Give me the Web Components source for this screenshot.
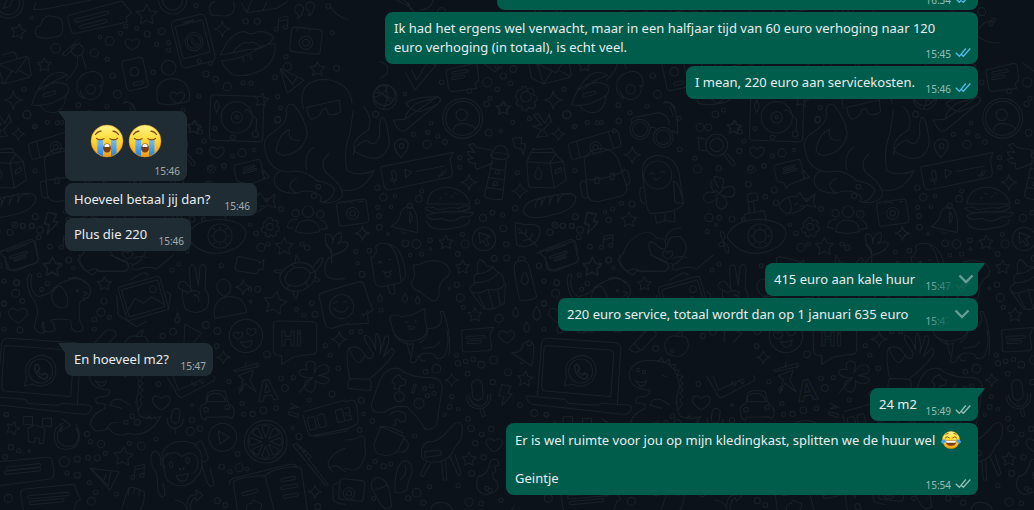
<!DOCTYPE html>
<html lang="nl">
<head>
<meta charset="utf-8">
<title>Chat</title>
<style>
html,body{margin:0;background:#0b1219}
body{font-family:"Noto Sans","Segoe UI",sans-serif;font-size:13px;line-height:19px;color:#e9edef}
</style>
</head>
<body>
<chat-view>
  <chat-message side="out" read time="16:34" style="--min:481px">&nbsp;</chat-message>
  <chat-message side="out" read time="15:45" style="--min:593px">Ik had het ergens wel verwacht, maar in een halfjaar tijd van 60 euro verhoging naar 120<br>euro verhoging (in totaal), is echt veel.</chat-message>
  <chat-message side="out" read time="15:46" style="--min:292px">I mean, 220 euro aan servicekosten.</chat-message>
  <chat-message side="in" first large time="15:46" style="--min:122px"><chat-emoji kind="cry"></chat-emoji><chat-emoji kind="cry"></chat-emoji></chat-message>
  <chat-message side="in" time="15:46" style="--min:192px">Hoeveel betaal jij dan?</chat-message>
  <chat-message side="in" time="15:46" style="--min:126px">Plus die 220</chat-message>
  <chat-message side="out" first menu="soft" time="15:47" style="--min:213px">415 euro aan kale huur</chat-message>
  <chat-message side="out" menu="full" time="15:47" style="--min:420px">220 euro service, totaal wordt dan op 1 januari 635 euro</chat-message>
  <chat-message side="in" first time="15:47" style="--min:148px">En hoeveel m2?</chat-message>
  <chat-message side="out" first time="15:49" style="--min:108px">24 m2</chat-message>
  <chat-message side="out" time="15:54" style="--min:472px">Er is wel ruimte voor jou op mijn kledingkast, splitten we de huur wel <chat-emoji kind="joy"></chat-emoji><br><br>Geintje</chat-message>
</chat-view>

<template id="view-t">
<style>
:host{display:grid;height:100vh;overflow:hidden}
chat-doodles,.list{grid-area:1/1;min-height:0;min-width:0}
.list{display:flex;flex-direction:column;justify-content:flex-end;gap:2px;padding:0 56px 15px 65px;box-sizing:border-box}
::slotted([first]){margin-top:10px}
</style>
<chat-doodles></chat-doodles>
<main class="list"><slot></slot></main>
</template>

<template id="message-t">
<style>
:host{display:flex;flex:none}
:host([side=out]){justify-content:flex-end;--fill:#005c4b}
:host([side=in]){--fill:#202c33}
.bubble{position:relative;display:grid;box-sizing:border-box;max-width:65%;min-width:var(--min,0);background:var(--fill);border-radius:8px}
.text{grid-area:1/1;padding:7px 9px}
.text::after{content:"";display:inline-block;width:34px}
:host([side=out]) .text::after{width:50px}
:host([large]) .text{display:flex;justify-content:center;height:38px;padding:11px 23px 21px}
:host([large]) .text::after{display:none}
.meta{grid-area:1/1;place-self:end;display:flex;gap:4px;padding:0 7px 4px 0;font-size:10px;line-height:12px;color:rgba(255,255,255,.6)}
.meta svg{width:16px;height:12px;fill:none;stroke:currentColor;stroke-width:1.3}
:host([read]) .meta svg{color:#53bdeb}
.tail{position:absolute;top:0;width:8px;height:12px;fill:var(--fill)}
:host([side=in]) .tail{left:-7px}
:host([side=out]) .tail{right:-7px;transform:scaleX(-1)}
:host([side=in][first]) .bubble{border-top-left-radius:0}
:host([side=out][first]) .bubble{border-top-right-radius:0}
button{position:absolute;inset:4px 2px 2px auto;width:52px;border:0;border-radius:8px;display:flex;align-items:flex-start;justify-content:flex-end;color:rgba(255,255,255,.4);background:linear-gradient(90deg,rgba(0,92,75,0),rgba(0,92,75,.9) 60%);padding:6px 2px}
:host([menu=full]) button{padding-right:6px;background:linear-gradient(90deg,rgba(0,92,75,0),#005c4b 50%)}
button svg{width:16px;height:12px;fill:none;stroke:currentColor;stroke-width:2.4}
</style>
<div class="bubble">
<div class="text"><slot></slot></div>
<div class="meta"><time></time></div>
</div>
</template>

<script>
const tpl=id=>document.getElementById(id).content.cloneNode(true);

/* Faces: crying and laughing */
class ChatEmoji extends HTMLElement{
  connectedCallback(){
    if(this.shadowRoot)return;
    const cry=this.getAttribute('kind')==='cry';
    const r=this.attachShadow({mode:'open'});
    const base=`<defs><linearGradient id="y" x1="0" y1="0" x2="0" y2="1"><stop offset="0" stop-color="#fff58a"/><stop offset=".45" stop-color="#ffdb38"/><stop offset="1" stop-color="#f59a16"/></linearGradient><linearGradient id="b" x1="0" y1="0" x2="0" y2="1"><stop offset="0" stop-color="#7cc3f5"/><stop offset="1" stop-color="#2583e0"/></linearGradient></defs>`;
    const face=cry?`<circle cx="19" cy="19" r="16" fill="url(#y)" stroke="#e98b18" stroke-width=".5"/>
<path d="M9.500 17h5.500v17q-3-.6-5.500-3zM23 17h5.500v14q-2.500 2.400-5.500 3z" fill="url(#b)"/>
<path d="M8.500 16.500q3.500 2.500 7.500.3M22 16.800q4 2.200 7.500-.3M7.500 12.500q2-3 5.500-3.300M30.500 12.500q-2-3-5.500-3.300" fill="none" stroke="#8a4a0a" stroke-width="1.300" stroke-linecap="round"/>
<path d="M19 21.500c2.500 0 3.900 2 3.900 4.500s-1.500 4.500-3.900 4.500-3.900-2-3.900-4.500 1.400-4.500 3.900-4.500z" fill="#7b3b10"/><path d="M16.300 23.300q2.700-2.400 5.400 0l-.4 1.800h-4.600z" fill="#fff"/>`
    :`<circle cx="19" cy="19" r="16.500" fill="url(#y)" stroke="#e98b18" stroke-width=".5"/>
<path d="M8.500 20h21q-.5 10-10.500 10T8.500 20z" fill="#7b3b10"/><path d="M9.500 20.500h19l-.8 3.500H10.300z" fill="#fff"/>
<path d="M8 15q3.500-5 8 0M22 15q4.500-5 8 0M9 8.500q2-2 4.500-2M29 8.500q-2-2-4.500-2" fill="none" stroke="#8a4a0a" stroke-width="1.700" stroke-linecap="round"/>
<path d="M9 17.500q-1 8-5.500 8T.5 21Q3 18 9 17.500zM29 17.500q1 8 5.500 8t3-4.500Q35 18 29 17.500z" fill="#3fa4f0"/>`;
    r.innerHTML=`<style>:host{display:inline-block;${cry?'width:38px;height:38px':'width:20px;height:20px;margin-left:2px;vertical-align:-5px'}}svg{display:block;width:100%;height:100%}</style><svg viewBox="0 0 38 38" role="img" aria-label="${cry?'😭':'😂'}">${base}${face}</svg>`;
  }
}

class ChatMessage extends HTMLElement{
  connectedCallback(){
    if(this.shadowRoot)return;
    const r=this.attachShadow({mode:'open'});
    r.append(tpl('message-t'));
    r.querySelector('time').textContent=this.getAttribute('time');
    const bubble=r.querySelector('.bubble');
    if(this.getAttribute('side')==='out')
      r.querySelector('.meta').insertAdjacentHTML('beforeend','<svg viewBox="0 0 16 12" aria-hidden="true"><path d="M.8 4.800 4.300 8.300 10.800.5M6.500 6.500l1.800 1.800L15.300.5"/></svg>');
    if(this.hasAttribute('first'))
      bubble.insertAdjacentHTML('beforeend','<svg class="tail" viewBox="0 0 8 12" aria-hidden="true"><path d="M8 0H1Q0 0 .5 1L7 9.500 8 12z"/></svg>');
    if(this.hasAttribute('menu'))
      bubble.insertAdjacentHTML('beforeend','<button type="button" aria-label="Berichtmenu"><svg viewBox="0 0 16 12"><path d="M1.500 2.500 8 9l6.500-6.500"/></svg></button>');
  }
}

/* Wallpaper: a doodle tile, 540px wide, repeated across the window */
const star=(x,y,r=22,a=0)=>{let p='';for(let i=0;i<10;i++){const q=i%2?r*.5:r,t=(a-90+i*36)*Math.PI/180;p+=(i?'L':'M')+(x+q*Math.cos(t)).toFixed(1)+' '+(y+q*Math.sin(t)).toFixed(1)}return p+'Z'};
const spark=(x,y,r=24)=>`M${x} ${y-r}Q${x+3} ${y-3} ${x+r} ${y}Q${x+3} ${y+3} ${x} ${y+r}Q${x-3} ${y+3} ${x-r} ${y}Q${x-3} ${y-3} ${x} ${y-r}Z`;
const heart=(x,y,r=20)=>`M${x} ${y+r}C${x-r*1.8} ${y+r*.1} ${x-r} ${y-r*1.3} ${x} ${y-r*.4}C${x+r} ${y-r*1.3} ${x+r*1.8} ${y+r*.1} ${x} ${y+r}Z`;
const ring=(x,y,r)=>`M${x-r} ${y}a${r} ${r} 0 1 0 ${2*r} 0a${r} ${r} 0 1 0 ${-2*r} 0Z`;
const bolt=(x,y,s=1)=>`M${x-12*s} ${y-32*s}L${x+16*s} ${y-26*s}L${x+6*s} ${y-6*s}L${x+20*s} ${y-2*s}L${x-12*s} ${y+32*s}L${x-6*s} ${y+6*s}L${x-20*s} ${y+2*s}Z`;
const drop=(x,y,r=12)=>`M${x} ${y-r*1.6}Q${x+r*1.4} ${y+r*.3} ${x} ${y+r}Q${x-r*1.4} ${y+r*.3} ${x} ${y-r*1.6}Z`;
const note=(x,y)=>`M${x-14} ${y+16}L${x-12} ${y-16}L${x+16} ${y-22}L${x+15} ${y+10}M${x-12} ${y-6}L${x+15} ${y-12}`+ring(x-19,y+17,6)+ring(x+9,y+11,6);
const box=(x,y,w,h,a,rx=10)=>`<rect x="${x-w/2}" y="${y-h/2}" width="${w}" height="${h}" rx="${rx}" transform="rotate(${a} ${x} ${y})"/>`;
const pill=(x,y,w,a,h=10)=>box(x,y,w,h,a,h/2);
const P=d=>`<path d="${d}"/>`;
const dots=(s)=>P(s.trim().split(/\s+/).map(t=>{const[a,b,c]=t.split(',').map(Number);return ring(a,b,c||7)}).join(''));
const call='M-12 -10Q-8 -16 -4 -10L-2 -4L-6 0Q-2 6 4 8L8 4L14 8Q14 16 6 16Q-12 10 -12 -10Z';
const at=(x,y,d,s=1)=>`<g transform="translate(${x} ${y}) scale(${s})"><path d="${d}"/></g>`;

const areaA=P(ring(25,10,45)+ring(25,10,34)+'M10 25L20 0L40-8L30 18Z'
 +'M108 8L100 28L130 28L275 0M210 45L360 4Q368 2 372 10L395 38L378 52L382 66L225 100Q216 102 213 92L203 55Q202 47 210 45Z'
 +'M110 110Q98 82 122 76Q130 40 160 50Q192 52 188 80Q192 112 160 112Q130 118 110 110Z'
 +star(55,95,24,10)+star(440,45,32)+ring(518,0,42)+ring(518,0,30)+'M630 35Q622 12 645 5M700 5Q712 45 675 48L645 46Q630 46 630 35'
 +heart(397,130)+spark(667,87)
 +'M662 165Q690 95 735 95Q755 108 770 96Q800 90 822 112Q800 150 745 148Q700 160 662 165ZM665 182Q720 180 765 152Q800 128 825 132Q830 170 800 200Q750 235 700 225Q670 205 665 182ZM700 155Q730 120 745 130Q765 120 780 140M728 170L732 185M750 165L756 180'
 +note(848,70)+'M885 30a13 13 0 1 1 22 6Q905 52 892 55Q898 46 892 40Q885 38 885 30ZM918 22a13 13 0 1 1 22 6Q938 44 925 47Q931 38 925 32Q918 30 918 22ZM725 10L740 38L830 25L862 5M740 38L755 0M790 30L800 5'
 +'M990 20Q1010 50 1045 60'
 +star(952,208,23)+'M840 205L912 240L862 280ZM843 210L878 252L892 230'
 +'M-10 195L75 170Q83 168 85 175L93 220Q94 230 86 233L10 252L-8 190M-5 192L48 218L80 174M12 250L35 214M88 228L58 212M5 165L40 155Q48 155 50 176M-35 185L-25 235L10 252'
 +star(133,195,22)+'M190 160L235 118M186 160Q192 170 200 165L240 125'+ring(232,150,18)
 +'M232 168Q240 205 200 240M246 165L258 205M230 250Q240 215 285 214Q315 225 308 258L298 258M95 315Q110 260 150 225Q180 208 202 226Q160 240 130 268M95 315Q140 320 175 300Q220 280 200 255Q160 235 115 270M120 318Q135 340 165 338Q195 330 198 285M232 255Q225 280 250 295'
 +ring(272,268,14)+'M240 270a32 32 0 1 0 62-14'+ring(506,203,22)+'M475 310Q460 260 490 242Q520 228 550 245Q575 270 567 302Q520 320 475 310'+heart(532,290,20)
 +spark(40,300,28)+ring(710,352,47)+ring(710,352,17)+ring(710,352,5)+'M735 333Q740 326 748 334L770 358L768 392M650 300L658 318L650 338L643 318Z'+ring(766,402,9)
 +star(785,300,22,8)+star(583,383,22,10)+'M370 310Q395 300 405 325'
 +'M910 325Q890 240 975 238Q1050 245 1056 310M920 322L1018 300L1022 335Q1005 348 985 342L978 325L965 330Q962 352 935 358L925 345Z'
 +heart(651,455)+bolt(155,668)
 +'M-10 760L105 722Q115 760 110 765M20 755L80 735')
 +pill(275,50,104,-14)+pill(280,72,84,-14)+box(580,123,105,145,-14,14)+box(578,118,84,100,-14,4)+P(ring(582,125,27)+ring(582,125,20))+at(582,125,call,.8)+P(ring(598,184,6))+pill(566,65,30,-14,4)
 +box(918,122,92,74,6)+P(ring(918,128,20)+ring(918,128,10)+'M890 92L895 82L925 84L930 92')+box(405,222,65,92,-12)+P(ring(403,215,13))+pill(415,250,30,-12)+pill(148,282,40,-16)
 +box(710,355,160,136,2)
 +dots('167,145,14 95,53,5 283,159,12 300,112,5 329,123,13 362,100,6 378,78,6 410,85,6 442,102,9 485,94,10 470,133,6 505,128,6 505,150,6 588,17,6 737,64,8 772,64,9 985,18,7 997,98,6 1010,205,9 862,200,12 858,170,6 825,232,7 618,222,9 647,237,8 682,260,12 729,248,6 753,250,6 597,288,6 632,190,6 322,178,6 338,227,8 352,283,12 460,217,7 270,338,6 235,315,7 172,368,6 80,345,12 103,380,6 72,268,6 833,358,9 833,290,6 645,385,6 672,497,7 632,505,6 698,412,7 955,560,7 800,600,5 120,690,10 95,678,7 68,678,8 45,675,9 105,512,6 600,395,7');

const areaE=P(star(132,112,22)+ring(80,165,33)+ring(80,165,20)+'M102 195L128 228Q138 228 134 216L110 190M45 148L25 142L28 180L48 182'+ring(30,112,12)+ring(55,112,10)
 +'M85 292Q60 250 85 262Q110 262 96 296Q130 280 134 300Q138 330 98 316Q125 345 95 358Q70 350 84 322Q55 350 42 330Q35 300 76 308Q55 290 66 270M76 300L98 320M98 300L76 320'
 +'M110 440Q130 390 205 388Q280 392 288 425Q288 470 220 488Q150 500 110 440ZM158 388L165 372L222 362L228 388M178 368L172 318Q175 306 200 310L204 330L190 332L194 364M176 335L190 335M100 455Q85 425 95 425Q110 430 100 455Q80 460 90 470Q110 470 100 455Q105 490 115 490Q122 470 100 455'
 +ring(210,438,36)+ring(210,438,19)+'M190 415l3 4M230 415l-3 4M190 462l3-4M230 462l-3-4M182 438h6M234 438h6M210 410v5M210 462v5'
 +'M268 345Q285 315 320 320L330 308L340 325L350 332L375 312L370 335L378 352L350 345Q325 372 290 370Q270 362 268 345ZM295 325Q310 345 300 368M315 345l8-6M330 350l10-4'
 +'M350 390l5-8l10 2l3 9l9-3l7 8l-4 9l8 5l-1 10l-9 3l1 10l-9 5l-7-6l-7 7l-9-4v-10l-10-1l-3-10l8-6l-3-9l6-7z'+ring(360,410,10)
 +star(403,470,28)+ring(474,365,17)+'M437 425Q440 390 475 390Q510 395 508 425Q470 435 437 425Z'+ring(437,370,11)+ring(511,373,11)+'M412 412Q415 385 440 388M430 415L412 412M512 390Q530 395 532 415L512 418'
 +'M545 520L545 480Q520 460 528 432Q550 430 548 460Q550 430 572 428Q580 450 562 460Q590 450 595 462Q590 485 548 495M528 465Q540 475 545 495'
 +'M255 225L325 208Q330 208 332 215L342 262Q340 270 330 272L295 285L290 295L280 278L268 276Q262 275 260 268L252 235Q252 226 255 225Z'
 +'M345 178Q335 150 365 130Q420 95 408 60Q415 35 432 45Q465 85 472 130Q460 190 400 196Q370 190 382 165Q390 130 418 118Q412 158 452 150M345 178Q355 245 420 246Q460 235 500 272Q545 280 555 300Q540 340 510 335Q520 320 500 310Q470 295 440 310Q400 285 440 265M372 270Q375 310 440 310M372 270Q375 250 390 245M470 240Q460 190 492 172M536 192Q505 220 530 250Q585 290 575 322Q550 345 510 335M575 300Q640 310 672 242Q620 262 590 240Q580 180 600 130L610 60M640 50Q670 80 655 120Q600 150 615 185Q700 235 718 160Q710 80 695 82Q685 100 690 130Q680 180 650 150Q610 165 610 195'
 +ring(703,15,32)+'M680 -5L725 38M672 22Q705 15 715 -15'
 +spark(637,430,22)
 +'M730 90L765 88L860 22Q875 20 870 35L765 122Q745 130 730 90ZM765 88Q770 60 800 40L860 22M345 262Q330 245 340 240L358 262L335 270Z'
 )+pill(297,232,36,-16,6)+pill(299,243,42,-16,6)+box(608,368,90,72,-8)+P(ring(608,370,18)+ring(608,370,8)+'M585 340q10-10 22 0M628 335h10')
 +dots('76,73,10 100,60,6 15,205,6 22,237,12 86,235,8 184,237,12 222,228,6 175,283,9 162,153,6 148,183,8 247,198,6 276,188,12 312,180,5 226,320,7 253,300,9 258,338,8 160,388,6 57,383,12 88,383,7 126,387,9 52,425,6 78,405,4 318,430,7 333,472,12 355,462,6 300,404,5 393,357,7 492,318,8 383,90,9 391,53,6 456,462,6 472,473,8');

const areaC=P(ring(353,55,60)+ring(353,55,51)+ring(350,45,17)+'M326 92Q325 70 355 70Q388 75 392 88'+star(473,25,22)
 +'M168 172Q140 145 152 125Q170 108 188 125Q195 145 168 172Z'+ring(170,138,7)
 +'M110 200L310 160L325 156L316 178L322 218Q322 230 310 232L132 270Q122 270 118 260L108 212Q106 202 110 200ZM180 208L182 234L200 216ZM215 214L298 198M278 224l6 6l10-18M288 222l5 5l10-16M136 236Q140 250 156 240M148 246l2 8'
 +'M370 135L385 130Q388 138 395 142L440 150L442 190L395 208Q388 200 392 190Q370 190 368 178Q378 175 385 175Q365 165 368 155Q380 155 390 158ZM445 155Q450 135 468 136Q488 138 487 160M436 165Q450 150 492 165Q494 175 480 178Q460 180 440 172ZM442 180L418 288Q425 300 472 298L484 182M436 205L480 212M430 232L480 240M424 262L475 270M450 216q8-12 14 0v5h-14zM444 250q8-12 14 0v6h-14z'
 +spark(372,247,24)+spark(525,273,24)+'M502 115L530 112L528 130L542 132L535 165L530 148L510 142Z'
 +'M565 45L578 40L600 70L612 45L618 62L595 90L608 108L575 112L590 90L560 78L590 75ZM612 40L620 68'+spark(640,102,20)+spark(862,165,26)
 +'M545 185L562 150L620 145L632 162L655 185L664 240L628 264L560 262Q550 262 550 250ZM545 185L615 190L655 185M615 190L628 264M632 162L615 188M562 158L625 158M562 150Q560 145 570 146'
 +drop(580,225,15)+'M630 212L648 202L650 212L632 222Z'
 +'M246 312Q250 262 310 262Q365 270 375 312ZM240 325Q260 315 280 330Q320 320 340 325Q375 310 375 325Q350 340 300 335Q260 345 240 325ZM245 345Q300 330 385 338Q380 355 350 350Q320 372 290 355Q250 365 245 345ZM245 365Q255 390 300 388L350 380Q378 370 372 358M285 295l6-3M300 280l6 3M318 292l6-4M330 278l6 4'
 +'M138 380Q165 365 168 335Q180 312 205 325Q222 350 216 398ZM168 395q8 10 16 2M195 335q14 15 0 35q-4-15 0-35'+ring(194,318,8)
 +ring(417,417,35)+'M402 397L435 410L422 416L432 434L424 438L414 422L405 430Z'+star(303,428,22)
 +'M510 368L540 374Q585 370 585 390Q585 435 535 440L515 435ZM520 385L578 440M540 405L545 390M555 420L562 400M535 400L522 398M552 418L535 422'
 +'M535 335Q535 300 610 290Q680 270 692 290Q695 330 620 345Q550 365 535 335ZM570 322Q575 290 590 300L588 320Q600 280 615 290L612 315Q625 275 640 285L638 308Q650 275 670 285'
 +'M582 455L672 420Q682 416 686 424L700 475Q700 485 692 488L635 512Q620 515 612 505L600 475Z'
 +star(742,500,30)+star(852,360,24)+bolt(738,370)+note(788,425)
 +'M672 145Q668 130 680 128L805 90Q815 88 820 96L828 130Q828 142 815 143L690 177Q680 180 678 170ZM695 125L705 172M790 95L805 143M718 180Q730 145 775 145Q810 150 822 185L845 260Q848 280 830 288L760 305Q735 305 728 290ZM722 240Q780 240 835 215M705 250Q712 235 725 250M705 250L712 290Q722 298 732 290M830 212Q845 205 850 218L855 245Q850 255 842 255'+ring(752,142,17)+ring(752,142,8)+'M750 232h12v18h-12zM796 220h12v18h-12z'
 +'M895 240Q880 170 940 166Q1000 170 1005 240L1016 310Q1000 340 915 340Q905 335 895 240Z'+ring(938,225,42)+'M915 222q7-8 14 0M945 218q7-8 14 0M925 235q12 8 20-2M885 270Q882 310 898 310M893 262Q885 262 885 270M985 245Q1000 240 1016 310L990 308ZM930 345L935 370L960 362L990 365L988 335M960 342v20'
 +ring(885,88,30)+ring(885,88,22)+ring(955,112,30)+ring(955,112,22)+'M858 68Q855 50 880 50L940 38Q975 45 972 75M915 85Q930 75 935 92M958 5Q1000 5 998 100L982 92M975 20L985 50'
 +'M835 460Q850 410 905 396Q925 398 935 415Q965 410 962 440Q960 455 940 440Q910 410 912 440Q915 465 935 475L968 490Q975 510 960 514Q920 515 875 512L865 525Q835 515 818 480ZM962 420Q965 385 1010 384M968 440Q965 405 1005 410Q1040 440 1010 475Q990 500 975 490'+heart(968,463,14)
 +'M92 440Q100 425 130 432Q175 440 182 525Q180 548 150 552L110 560Q92 562 88 540L78 470Q88 475 88 460Q98 462 92 440ZM130 432Q160 450 168 545M128 555L135 580Q148 588 150 575L145 552M100 490l8-6M100 484l10 6M130 480l8-2M112 515Q128 520 140 512M118 518q2 15 14 12q6-4 3-14'
 +'M205 495Q225 495 240 485Q280 475 305 495Q325 520 300 535Q280 550 282 580Q280 605 262 603Q240 590 225 575Q195 565 200 545Q212 530 208 515Z'+star(353,502,22)
 +'M375 570Q375 555 390 550Q380 525 400 520Q390 495 405 478Q420 485 425 498Q450 500 455 515Q475 520 478 550Q470 575 430 568Q390 590 375 570ZM395 520Q420 525 445 500M388 548Q430 550 460 520M378 575L415 625Q440 635 478 610L482 550M400 585l20 38M430 572l14 50M458 565l8 48'
 +'M508 510Q505 485 525 482Q550 480 552 500L575 590Q572 600 528 602Q520 600 508 510ZM520 480L520 472Q530 468 540 472L540 482'+drop(539,540,15)
 +star(390,645,22)+heart(485,708,22)+drop(512,640)+drop(575,645,16)+drop(545,685)+drop(105,597,9)+drop(180,597,11)+drop(218,603,9)
 +'M135 650Q150 640 170 650L200 645L240 625L240 660Q255 700 230 715Q180 735 150 705Q138 680 135 650ZM180 665l8 4M210 662l4 6M188 680l8-3l6 3M192 682q0 10 8 6q8 0 8-8M245 685Q290 690 290 650Q280 630 295 635Q320 700 312 765M185 725L195 765M235 745L270 740L285 725'
 +'M350 690L445 682L435 705L440 745Q440 750 430 752L360 756Q352 756 352 748ZM50 640l5 8l14-16'
 +spark(52,400,20))+pill(640,465,55,-18,7)+pill(645,475,36,-18,7)+pill(392,712,58,-3,8)+pill(388,726,44,-3,8)+box(147,225,12,28,-8,6)
 +dots('205,103,6 248,97,6 278,108,6 300,126,7 258,70,5 246,133,12 425,12,8 503,67,6 431,98,10 467,92,5 553,56,6 666,43,12 691,78,6 727,67,6 770,67,6 821,63,8 808,92,6 906,18,6 97,263,8 115,292,11 150,287,5 98,322,6 138,320,5 102,348,7 103,382,9 129,402,4 222,296,10 230,273,6 344,173,6 344,202,6 517,218,6 397,305,6 414,354,11 442,338,7 473,345,6 475,385,10 511,325,8 484,433,8 485,474,9 448,475,9 181,430,10 214,432,13 255,421,7 195,465,5 230,462,6 256,447,4 352,403,6 360,432,12 338,462,7 336,554,8 346,593,12 355,622,6 313,565,4 51,523,9 32,455,6 38,490,5 73,452,7 691,350,9 628,372,5 654,377,7 681,378,8 615,397,9 701,412,7 791,360,8 803,327,6 780,335,5 829,310,6 861,312,9 735,440,7 792,480,8 582,497,8 597,543,6 635,548,8 462,655,12 597,610,8 20,695,6 47,695,6 108,630,6 1004,148,7 1003,55,6 92,43,9');

const areaB=P('M15 5L18 30Q22 48 35 46L105 25Q118 20 114 8M40 18L80 5'+star(157,38,30,3)+star(313,87,22)
 +'M82 70Q88 50 95 60Q85 110 115 125Q160 115 160 100Q190 75 225 70Q270 75 272 110Q270 130 240 140Q235 165 240 200Q255 215 245 228Q225 235 215 220L212 195Q175 190 150 195Q165 205 165 225Q155 235 135 228L130 200Q120 215 135 232Q110 240 103 215Q108 190 112 180Q115 160 105 140Q80 110 82 70ZM155 120Q165 90 185 95Q210 125 200 155Q180 165 165 150Q152 135 155 120ZM205 70Q240 60 255 85M250 110l14 4l-12 8M250 128q8 4 14 0'+ring(232,107,3)
 +heart(54,178,26)
 +'M238 0Q240 40 265 48Q290 35 300 50L375 48Q395 40 380 20L330 0M400 30Q390 45 410 45Q440 30 470 42L520 0M400 10Q420 0 440 8'
 +'M350 120L355 180L410 215L440 198M390 75L425 55Q435 50 445 60M500 110L512 118L505 165M378 175L405 130L430 145L455 125L492 148'+ring(459,103,10)
 +'M560 110Q530 100 535 90Q540 75 555 80L575 105M572 100L568 40Q575 22 585 35L595 92L600 35Q610 20 618 38L615 100Q635 130 620 160Q585 185 555 160Q545 130 548 108M560 115Q580 100 600 112Q590 130 580 118Q600 120 596 140'
 +'M672 72Q695 80 692 105Q680 128 668 122Q645 105 652 85Q660 72 672 72ZM645 190Q635 150 665 130Q690 120 715 130Q735 140 740 172Z'
 +spark(730,97,23)+star(825,145,36,10)
 +'M710 15Q708 5 720 5L775 18L778 25L792 15L788 45L778 42Q775 58 760 55L715 48Q705 48 706 38Z'
 +ring(738,243,50)+heart(714,240,13)+heart(754,230,13)+'M722 260Q740 265 757 255Q755 275 740 277Q728 275 722 260Z'
 +'M820 212Q820 198 835 198L938 200Q952 202 950 215L950 285Q950 298 935 298L882 305L845 328L845 302L832 300Q820 298 820 285Z'
 +'M840 75Q835 45 880 25Q930 15 945 50Q955 80 910 105Q855 120 840 75ZM855 75Q855 50 885 38Q920 32 930 55Q930 80 900 92Q860 100 855 75ZM885 25L888 0L900 20M940 35L960 10Q972 5 968 20L948 50M945 65L960 75Q955 85 940 75M895 108L890 130Q882 135 880 110M840 55L822 50Q820 42 842 46M885 38L875 28M930 55L945 48M915 82L922 92M870 88L862 98'
 +'M975 50Q970 10 1005 0M975 50Q980 80 1035 70'+ring(1025,155,36)+'M962 115L1035 92L1080 80Q1090 80 1092 90L1110 145L1120 165L1103 175L1105 205L1045 208M960 115Q955 125 960 135L975 205Q980 220 995 220L1045 205M1000 160Q1030 185 1045 155M1000 145l12-6M1030 142l10-4'
 +spark(1018,253,24)+spark(670,307,20)
 +'M5 262Q10 248 30 250L225 263Q242 265 242 282L232 450M12 280Q13 270 25 272L208 285Q222 286 221 298L212 425M12 280L5 395Q5 405 15 408L212 425M5 262L-8 420M-40 430Q-45 422 -35 423L75 433L85 445L175 451L185 445L265 450Q278 452 272 465Q265 480 250 478L-20 448Q-35 445 -40 430'
 +ring(122,348,36)+'M73 392L80 366Q70 330 95 312Q125 290 155 312Q180 345 155 380Q125 402 98 388Z'
 +'M555 208L552 262M555 208L605 235L580 262M500 365L525 405Q530 425 545 428L640 378Q650 368 640 362M520 365L535 405L610 372M575 380q8 20 14 6M598 375q10 18 14 4'
 +'M330 405Q330 425 305 425Q280 425 290 445Q320 440 315 460Q270 480 272 510Q285 540 325 520Q350 550 385 535Q445 550 482 485Q460 490 440 490L422 484Q408 465 412 440M320 520Q330 500 355 502M440 490l8-8l6 10l10-6l6 8'
 +heart(484,440,25)+'M600 465Q600 450 618 445L622 415Q640 400 675 410L685 445Q705 455 702 480L696 490L682 485L618 487L616 496L605 490ZM622 440Q620 415 645 415Q672 415 678 440Z'+ring(618,464,7)+ring(682,457,7)
 +'M503 490Q500 520 525 520Q550 515 550 492M525 520L526 535'
 +'M70 485l28 0l-1 25l-28-3zM128 490l27 0l-1 25l-27-3zM83 520L105 510L135 520L130 565L118 565L118 550L105 548L105 562L85 560L85 540Z'
 +'M195 500L185 490L212 510L180 530L188 512Q165 530 175 560Q195 582 225 570Q245 545 228 520M228 508Q248 550 230 572Q200 592 172 575Q155 550 168 520Q178 508 190 505'
 +star(38,520,21,20)+star(370,605,30,5)+note(417,650)+'M270 640L357 650L330 705ZM272 640L325 692L332 650M310 678L318 660'
 +'M0 620L140 607Q155 605 157 618L162 655Q162 668 150 672L0 692M75 702Q60 705 62 718L70 765M75 702L215 688Q225 688 228 700L230 712L242 732L230 740L222 765'
 +ring(668,547,42)+'M655 528L688 546L660 567Z'+ring(797,560,64)+ring(797,560,53)
 +[0,1,2,3,4,5,6,7].map(i=>{const a=i*Math.PI/4,c=Math.cos(a),s=Math.sin(a),q=(u,v)=>(797+u*c-v*s).toFixed(0)+' '+(560+u*s+v*c).toFixed(0);return 'M'+q(12,0)+'L'+q(44,-12)+'Q'+q(54,0)+' '+q(44,12)+'Z'}).join('')
 +'M495 640Q475 600 500 575Q535 550 580 565Q610 590 605 620Q608 650 590 665Q570 700 525 690Q495 680 495 655Q480 615 500 598Q530 585 545 605Q570 585 590 605Q600 640 580 655M455 600Q445 620 470 655L475 710Q485 735 495 720Q495 700 488 685M452 610Q455 585 470 590Q485 600 482 630M585 575Q600 545 610 570L625 610Q615 630 605 615M605 630L620 680Q635 705 642 685L630 640M530 662Q550 662 565 655Q562 680 545 678Q530 675 530 662Z'
 +'M512 620a5 9 0 1 0 2 0zM562 608a5 9 0 1 0 2 0z'+ring(540,643,2)+ring(551,641,2)
 +'M365 762L385 700Q400 690 433 712Q435 740 420 765M388 700l-3 20M405 698l-4 18M420 705l-4 18M525 735Q555 740 560 760Q560 715 590 720L588 705L608 720L590 738L586 728Q570 735 570 765'
 +'M690 690Q685 675 700 670L870 628Q885 625 890 635M700 680Q720 665 795 662Q820 640 885 635Q905 635 905 650L922 765M795 662L822 765M700 680L712 765M740 765Q735 745 755 745Q755 730 765 738Q775 745 785 745Q785 760 780 765'
 +'M878 570L890 565L985 690L975 690ZM890 565L935 605L925 615M905 575l-8 8M915 585l-8 8M925 595l-8 8M700 345L770 325Q780 325 775 335L705 350ZM735 335L738 322M715 362L760 345L750 375L768 410L735 385L718 415L730 375ZM770 330l2 8'
 +'M938 368Q900 370 896 350Q905 338 922 345Q912 320 930 318Q950 318 945 340L942 355Q955 325 980 330Q995 345 980 355L955 362Q990 365 988 378Q975 395 945 378Q950 400 935 412Q920 410 912 395Q915 375 938 368ZM938 368L898 412'
 +'M870 462Q890 445 892 458ZM866 470l30 8l-2 10l-28-10zM870 445l28 14'
 +'M912 470L1035 435M908 480L925 535Q930 545 940 542L1045 520M945 545L1045 528M985 620Q1000 590 1035 580M988 640Q1005 620 1035 650M985 620Q982 640 1000 650'+spark(945,710,20)
 +'M1000 690L1020 680M998 695L1000 735Q1005 745 1035 748')
 +box(430,130,130,105,-16)+box(430,130,112,84,-16,4)+at(122,348,call,1.5)+box(527,482,24,44,8,12)+pill(68,648,110,-6)+pill(70,636,104,-6)+pill(145,722,125,-5)+pill(140,740,104,-5)+pill(865,672,44,-10)+pill(868,695,52,-10)+pill(872,722,46,-10)+pill(750,712,50,-14)
 +box(936,505,22,38,-14,4)+box(965,497,22,38,-14,4)+box(1020,482,22,38,-14,4)
 +`<text x="840" y="272" font-size="62">Hi</text><text x="772" y="437" font-size="86" transform="rotate(-8 800 410)">A</text>`
 +dots('50,83,9 47,115,12 12,78,6 12,147,7 67,138,7 60,225,9 12,222,6 118,60,6 125,103,6 142,85,7 206,15,9 220,38,5 303,172,12 328,187,6 283,193,7 283,222,6 312,138,9 532,195,8 519,230,10 488,243,8 516,45,6 537,27,6 533,178,4 618,210,10 652,228,10 650,273,7 664,32,6 750,103,5 773,103,9 752,140,4 935,145,7 889,163,6 945,178,9 912,180,6 801,298,10 843,370,7 880,368,6 855,399,10 687,380,6 928,435,6 996,417,9 1015,340,7 976,272,6 990,300,6 475,387,7 576,450,4 731,478,6 758,477,8 790,466,10 829,460,7 726,445,6 722,402,6 571,529,12 600,521,8 576,496,8 397,484,7 378,502,6 412,502,9 468,552,6 424,573,12 388,565,6 261,537,8 271,560,6 303,567,11 316,595,6 292,609,9 264,608,7 232,612,9 193,620,15 201,654,6 232,660,9 268,683,6 33,577,8 15,605,7 56,587,6 87,588,4 19,478,6 25,730,12 287,712,7 349,717,6 274,739,12 713,597,7 690,650,6 665,635,8 718,638,12 742,642,5 652,737,9 676,750,7 897,545,9 878,520,5 953,755,9');

const areaD=P('M15 150Q0 80 10 55Q40 40 60 75Q45 110 30 90Q10 60 15 55M60 75Q80 100 85 70Q50 20 60 15Q80 20 92 60Q88 10 97 10Q110 30 105 70L120 20Q135 10 130 40L115 80L140 55Q155 60 140 80Q110 120 75 145M15 145L75 148Q82 160 75 182L10 175Q5 160 15 145Z'
 +'M148 15Q180 50 205 40Q200 80 195 95Q215 105 218 80L235 70Q270 65 275 85Q290 90 300 75Q315 40 305 0M225 75Q220 95 240 92M250 0Q245 30 225 38'
 +'M500 68Q530 70 535 40Q560 25 566 45Q568 80 560 108ZM525 95q4 10 12 3'+ring(553,40,7)+star(540,147,24,6)+spark(320,150,20)+bolt(482,195)
 +'M105 150Q125 110 160 115Q200 145 250 142Q290 140 292 175L275 280Q270 300 240 298Q220 260 185 230Q150 225 120 245Q75 255 80 220ZM150 140l14-6l6 12l14 4l-4 16l-14 0l-4 14l-16-6l4-12l-10-6l6-12zM200 188L208 162L214 164L206 190Z'
 +ring(163,200,15)+ring(222,220,15)+ring(239,175,6)+ring(260,168,6)+ring(247,197,6)+ring(267,190,6)
 +'M363 198Q370 240 410 236Q440 225 437 190M370 195Q380 232 410 228Q430 218 428 192M405 238L412 260L420 258L415 236'
 +'M108 290L178 320L160 360Q140 385 100 372Q85 360 88 340ZM105 290Q130 285 175 310M175 325a18 18 0 1 1-12 40M135 255Q150 235 180 250Q190 280 165 275Q155 260 150 272Q160 290 140 285'
 +'M230 380Q225 345 250 335Q280 340 320 290Q345 265 352 290Q355 330 330 350Q320 385 285 395Q240 400 230 380ZM240 365L285 360L290 375L240 382ZM245 395L225 435L235 440L258 398M290 395L295 450L305 450L302 390M315 380L340 438L348 430L330 375'
 +'M150 455Q155 400 180 392Q205 395 200 430Q190 455 185 480Q165 495 150 485ZM165 450Q190 430 180 405M80 475Q75 445 100 442Q130 450 135 490L140 530Q120 545 105 520ZM90 480Q110 475 125 465'
 +'M400 440Q430 435 435 395Q450 380 460 395L462 405L450 410L452 425L442 430L445 445Q465 460 455 480Q430 500 410 490Q385 470 400 440Z'+ring(425,475,6)+heart(448,342,23)+star(372,388,22)
 +'M0 330Q30 330 50 318Q65 320 58 345Q70 380 40 415Q20 425 0 415M0 215L20 210Q30 210 35 225L40 270Q40 280 30 285L0 300M0 235l12-3l4 14l-16 4M0 258l16-4l4 14l-20 5'
 +'M853 55L905 0L925 0Q940 12 930 20L890 60Q865 75 853 55ZM868 42L885 60M960 40Q970 10 1000 20Q1030 10 1030 50Q1020 85 990 78Q955 75 960 40ZM995 18Q1000 5 1015 0L1010 15'
 +'M855 148Q845 110 885 95Q930 85 970 102Q1000 125 1003 170L992 220M938 95L950 82L958 98L972 88L976 106L990 102L990 118L1002 122L998 135L1014 140L1004 152L1014 160L1004 170L1014 180L1004 190L1014 200L1004 210L1012 220L1000 240M855 148Q865 178 915 180M870 152Q890 162 905 152Q900 172 885 168ZM950 135l15 6M915 228Q920 200 950 210L975 225M915 225L950 235'+ring(880,120,5)+ring(897,126,5)
 +'M255 545Q260 515 290 517Q320 520 322 545M510 525L500 540')
 +box(397,180,32,62,-5,16)+box(20,480,75,62,6)+P(ring(12,490,17)+ring(12,490,8))
 +dots('334,75,6 339,100,8 362,94,7 385,88,7 409,104,10 446,90,12 274,116,13 241,125,7 368,131,7 443,156,8 489,127,10 320,200,6 314,231,7 339,238,5 299,254,5 369,266,7 378,295,10 410,313,7 391,340,8 439,297,8 380,430,9 416,382,8 339,467,6 372,516,12 409,520,7 435,482,6 468,511,6 49,211,9 56,252,5 44,300,7 82,273,7 209,318,6 90,394,6 72,412,6 116,409,8 137,402,6 254,470,6 215,488,13 190,505,8 235,518,8 86,505,6 525,225,7 568,249,10 604,254,7 932,55,9 982,62,5');

const areaF=P('M50 0L90 22L88 12L70 0M80 5L95 32M122 55L80 10M160 0Q150 30 120 30M0 185Q35 195 18 225L0 235M75 215L105 270L168 195L150 188M95 210l14 30l30-48M0 258'
 +ring(15,292,36)+'M-15 275Q20 290 48 300M15 256Q30 290 10 328M78 310Q100 290 175 290Q190 300 170 315L120 335Q90 330 78 310'
 +'M310 190L345 215L365 200M198 210L280 190Q290 190 292 200L296 240L285 252L290 265L215 275Q208 272 205 262Z'
 +star(372,325,22)+'M412 272l12-2l2-10h12l4 10l10-6l10 8l-4 12l12 4l2 12l-10 6l6 12l-10 8l-12-4l-6 10l-14-4v-10l-12 0l-6-10l6-8l-8-8z'+ring(438,290,16))
 +pill(240,216,50,-10,8)+pill(235,232,40,-10,8)
 +dots('185,247,7 75,282,5 322,247,14 400,207,10 370,228,9 352,268,7 350,200,5 392,250,7 268,273,7 330,295,6');

/* Narrow strip of shapes near the tile's right side */
const edge=P(ring(905,35,12)+'M935 60q8-10 12-2l-12 20q-10 0-6-8zM895 110Q920 130 960 128M900 85Q910 60 940 65');

class ChatDoodles extends HTMLElement{
  connectedCallback(){
    const g=(x,y,s)=>`<g transform="translate(${x} ${y}) scale(.33333)">${s}</g>`;
    const tile=g(0,0,areaA)+g(150,90,areaE)+g(345,100,areaC)+g(0,255,areaB)+g(345,330,areaD)+g(380,0,areaF)+g(140,0,edge);
    const copies=[];
    for(let x=-540;x<=2700;x+=540)copies.push(`<use href="#tile" x="${x}"/>`);
    this.attachShadow({mode:'open'}).innerHTML=`<style>:host{display:block;overflow:hidden}svg{display:block;width:100%;height:100%;fill:none;stroke:#172026;stroke-width:3.6;stroke-linejoin:round;stroke-linecap:round;font-family:"Open Sans",sans-serif;font-weight:700}</style><svg aria-hidden="true"><defs><g id="tile">${tile}</g></defs>${copies.join('')}</svg>`;
  }
}
class ChatView extends HTMLElement{
  connectedCallback(){ if(!this.shadowRoot)this.attachShadow({mode:'open'}).append(tpl('view-t')); }
}
customElements.define('chat-doodles',ChatDoodles);
customElements.define('chat-emoji',ChatEmoji);
customElements.define('chat-message',ChatMessage);
customElements.define('chat-view',ChatView);
</script>
</body>
</html>
